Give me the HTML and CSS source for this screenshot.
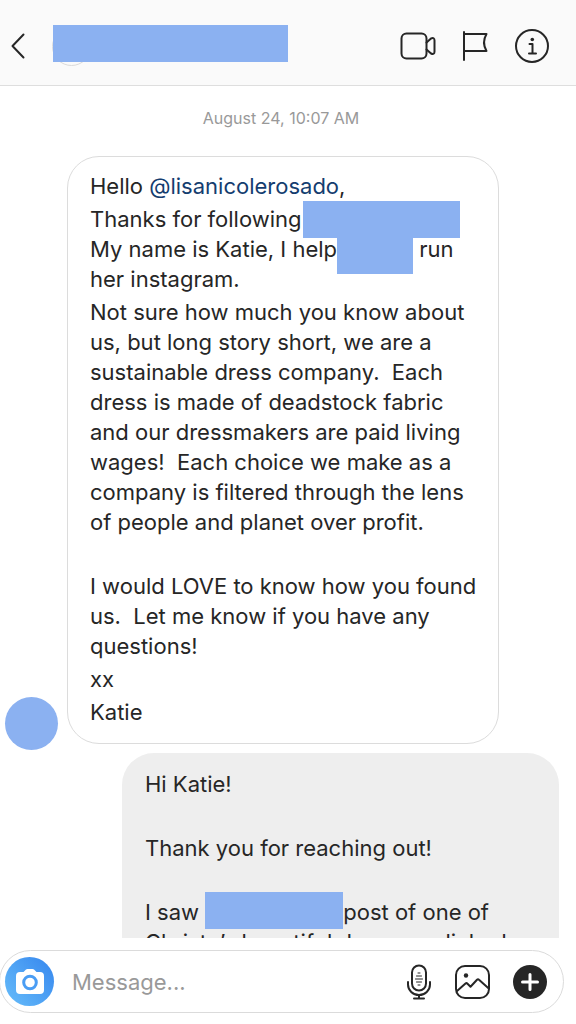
FILE: index.html
```html
<!DOCTYPE html>
<html lang="en">
<head>
<meta charset="utf-8">
<meta name="viewport" content="width=device-width, initial-scale=1">
<title>Messages</title>
<link rel="stylesheet" href="styles.css">
</head>
<body>
<div class="app">
  <header class="topbar">
    <button class="icon-btn back" aria-label="Back">
      <svg width="16" height="28" viewBox="0 0 16 28"><path d="M13.500 2.500 2.500 14l11 11.500"/></svg>
    </button>
    <div class="contact"><span class="contact-avatar"></span><span class="contact-name"></span></div>
    <nav class="actions">
      <button class="icon-btn" aria-label="Video call">
        <svg width="36" height="30" viewBox="0 0 36 30"><rect x="1.500" y="2.500" width="25" height="25" rx="5"/><path d="M26.500 11.500 31 7.500q3.500-1.500 3.500 2v11q0 3.500-3.500 2l-4.500-4"/></svg>
      </button>
      <button class="icon-btn" aria-label="Flag">
        <svg width="26" height="32" viewBox="0 0 26 32"><path d="M2 2v28M2 4h22.500q-5 8.500 0 17H2"/></svg>
      </button>
      <button class="icon-btn" aria-label="Details">
        <svg width="36" height="36" viewBox="0 0 36 36"><circle cx="18" cy="18" r="16"/><path d="M15.500 16H18.500v9.500M15 25.500h7"/><circle class="solid" cx="18.300" cy="11.500" r="1.800"/></svg>
      </button>
    </nav>
  </header>

  <main class="thread">
    <time class="stamp">August 24, 10:07 AM</time>
    <div class="row incoming">
      <span class="avatar"></span>
      <article class="bubble">
        <p>Hello <a class="mention" href="#">@lisanicolerosado</a>,</p>
        <p>Thanks for following<span class="redacted brand"></span><br>My name is Katie, I help<span class="redacted owner"></span> run<br>her instagram.</p>
        <p>Not sure how much you know about<br>us, but long story short, we are a<br>sustainable dress company.&nbsp; Each<br>dress is made of deadstock fabric<br>and our dressmakers are paid living<br>wages!&nbsp; Each choice we make as a<br>company is filtered through the lens<br>of people and planet over profit.</p>
        <p class="blank"></p>
        <p>I would LOVE to know how you found<br>us.&nbsp; Let me know if you have any<br>questions!</p>
        <p>xx</p>
        <p>Katie</p>
      </article>
    </div>
    <div class="row outgoing">
      <article class="bubble">
        <p>Hi Katie!</p>
        <p class="blank"></p>
        <p>Thank you for reaching out!</p>
        <p class="blank"></p>
        <p>I saw <span class="redacted author"></span>post of one of<br>Christy’s beautiful dresses, clicked</p>
      </article>
    </div>
  </main>

  <footer class="dock">
    <form class="composer">
      <button type="button" class="camera" aria-label="Camera">
        <svg width="30" height="28" viewBox="0 0 30 28"><path d="M5 4h3.500L11 1.500Q11.500 1 12.500 1h5q1 0 1.500.5L21.500 4H25q4 0 4 4v14q0 4-4 4H5q-4 0-4-4V8q0-4 4-4Z"/><circle cx="15" cy="14.500" r="6.300"/></svg>
      </button>
      <input class="field" type="text" placeholder="Message..." aria-label="Message">
      <div class="tools">
        <button type="button" class="icon-btn" aria-label="Voice message">
          <svg width="26" height="36" viewBox="0 0 26 36"><rect x="6" y="1.500" width="14" height="25" rx="7"/><path d="M2 18v2.500a11 10.500 0 0 0 22 0V18M13 31v3M8 34.500h10"/><path class="thin" d="M12 9h2M10.500 12h5M9.500 15h7M10.500 18h5M12 21h2"/></svg>
        </button>
        <button type="button" class="icon-btn" aria-label="Photo">
          <svg width="36" height="36" viewBox="0 0 36 36"><rect x="2" y="2" width="33" height="32" rx="9"/><circle class="solid" cx="12" cy="11.500" r="2.200"/><path d="m3 27 8.500-7.500q1-.8 2 .2l3 3 6.500-7q1-1 2 0l9.500 8.500"/></svg>
        </button>
        <button type="button" class="icon-btn" aria-label="More">
          <svg width="36" height="36" viewBox="0 0 36 36"><circle class="solid" cx="18" cy="18" r="17"/><path class="plus" d="M18 10.500v15M10.500 18h15"/></svg>
        </button>
      </div>
    </form>
  </footer>
</div>
</body>
</html>
```
FILE: styles.css
```css
* { box-sizing: border-box; }

body {
  margin: 0;
  background: #fff;
  color: #262626;
  font-family: Inter, "Liberation Sans", sans-serif;
  font-size: 22px;
  line-height: 30px;
}

.app { display: flex; flex-direction: column; height: 100vh; }

button { border: 0; padding: 0; background: none; font: inherit; }
.icon-btn { display: flex; flex: none; }
svg { display: block; fill: none; stroke: #262626; stroke-width: 2; stroke-linecap: round; stroke-linejoin: round; }
svg .solid { fill: #262626; stroke: none; }
svg .thin { stroke-width: 1; }
svg .plus { stroke: #fff; stroke-width: 3; }

.topbar {
  display: flex;
  align-items: center;
  flex: none;
  padding: 25px 26px 19px 10px;
  background: #fafafa;
  border-bottom: 1px solid #dedede;
}
.contact { position: relative; margin: 0 auto 4px 27px; }
.contact-avatar {
  position: absolute;
  left: -1px;
  bottom: -4px;
  width: 39px;
  height: 39px;
  border: 1px solid #dadada;
  border-radius: 50%;
}
.contact-name { display: block; position: relative; width: 235px; height: 37px; background: #8bb1f1; }
.actions { display: flex; align-items: center; gap: 26px; }

.thread { flex: 1; min-height: 0; overflow: hidden; }
.stamp {
  display: block;
  padding: 17px 14px 23px 0;
  color: #999;
  font-size: 16px;
  text-align: center;
}

.row { display: flex; }
.incoming { align-items: flex-end; gap: 9px; padding: 0 77px 9px 5px; }
.outgoing { padding: 0 17px 0 122px; }
.avatar { flex: none; width: 53px; height: 53px; margin-bottom: -6px; border-radius: 50%; background: #8bb1f1; }

.bubble { flex: 1; display: flex; flex-direction: column; gap: 3px; border-radius: 32px; white-space: nowrap; }
.incoming .bubble { padding: 14px 22px 16px; border: 1px solid #dcdcdc; }
.outgoing .bubble { padding: 16px 23px; background: #eee; }
.bubble p { margin: 0; }
.bubble .blank { height: 28px; }
.mention { color: #143d6f; text-decoration: none; }

/* Negative block margins keep the cover taller than the text without stretching its line. */
.redacted { display: inline-block; height: 37px; margin: -10px 0; background: #8bb1f1; }
.brand { width: 157px; margin-left: 1px; vertical-align: -1px; }
.owner { width: 76px; vertical-align: -7px; }
.author { width: 138px; vertical-align: 1px; }

.dock { flex: none; padding: 12px 12px 11px 0; }
.composer {
  display: flex;
  align-items: center;
  gap: 18px;
  margin-left: -1px;
  padding: 6px 15px 6px 5px;
  border: 1px solid #dbdbdb;
  border-radius: 32px;
}
.tools { display: flex; align-items: center; gap: 22px; }
.camera {
  display: grid;
  place-items: center;
  flex: none;
  width: 49px;
  height: 49px;
  border-radius: 50%;
  background: linear-gradient(50deg, #67bdfa, #3586ee);
}
.camera path { fill: #fff; stroke: none; }
.camera circle { stroke: #4a9df4; stroke-width: 3; }
.field {
  flex: 1;
  min-width: 0;
  padding: 0;
  border: 0;
  outline: 0;
  background: none;
  color: #262626;
  font: inherit;
}
.field::placeholder { color: #999; opacity: 1; }
```
